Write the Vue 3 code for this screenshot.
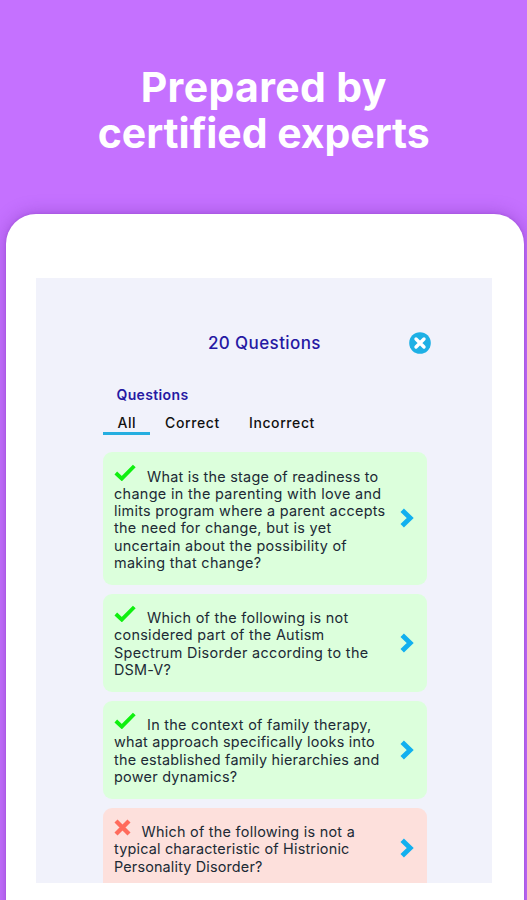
<script setup>
const questions = [
  {
    correct: true,
    lines: [
      ['What is the stage of readiness to', 231.5],
      ['change in the parenting with love and', 267.5],
      ['limits program where a parent accepts', 271.5],
      ['the need for change, but is yet', 217.5],
      ['uncertain about the possibility of', 233],
      ['making that change?', 147.5]
    ]
  },
  {
    correct: true,
    lines: [
      ['Which of the following is not', 201.5],
      ['considered part of the Autism', 210.5],
      ['Spectrum Disorder according to the', 254.5],
      ['DSM-V?', 57]
    ]
  },
  {
    correct: true,
    lines: [
      ['In the context of family therapy,', 224.5],
      ['what approach specifically looks into', 261],
      ['the established family hierarchies and', 265.5],
      ['power dynamics?', 123.5]
    ]
  },
  {
    correct: false,
    lines: [
      ['Which of the following is not a', 213.5],
      ['typical characteristic of Histrionic', 235.5],
      ['Personality Disorder?', 148.5]
    ]
  }
]

// Tracks a line of text out or in so that it sets to the given measure.
const vFit = {
  mounted(el, { value }) {
    el.style.letterSpacing = '0px'
    const width = el.getBoundingClientRect().width
    el.style.letterSpacing = (value - width) / el.textContent.length + 'px'
  }
}
</script>

<template>
  <main class="promo">
    <h1 class="headline">
      <span class="row"><span v-fit="246" class="fit">Prepared by</span></span>
      <span class="row"><span v-fit="332" class="fit">certified experts</span></span>
    </h1>
    <section class="tablet">
      <div class="screen">
        <header class="bar">
          <h2 class="title"><span v-fit="113" class="fit">20 Questions</span></h2>
          <svg class="close" viewBox="0 0 22 22">
            <circle cx="11" cy="11" r="10.8" fill="#1eb0e5" />
            <path d="M7 7l8 8M15 7l-8 8" stroke="#fff" stroke-width="3.4" stroke-linecap="round" />
          </svg>
        </header>
        <h3 class="subtitle"><span v-fit="72" class="fit">Questions</span></h3>
        <nav class="tabs">
          <span class="tab active"><span v-fit="18.5" class="fit">All</span></span>
          <span class="tab"><span v-fit="55" class="fit">Correct</span></span>
          <span class="tab"><span v-fit="66" class="fit">Incorrect</span></span>
        </nav>
        <div class="list">
          <article v-for="(q, i) in questions" :key="i" class="card" :class="{ wrong: !q.correct }">
            <div class="text">
              <div v-for="(line, n) in q.lines" :key="n" class="line">
                <svg v-if="n === 0 && q.correct" class="check" viewBox="0 0 22 17">
                  <path d="M1.8 9l6 5.6L20.3 2" fill="none" stroke="#0ff00f" stroke-width="3.9" />
                </svg>
                <svg v-else-if="n === 0" class="cross" viewBox="0 0 17 17">
                  <path d="M2 2l13 13M15 2L2 15" fill="none" stroke="#ff6b5c" stroke-width="4.3" />
                </svg>
                <span v-fit="line[1]" class="fit">{{ line[0] }}</span>
              </div>
            </div>
            <svg class="chevron" viewBox="0 0 14 20">
              <path d="M2.2 2.2l8 7.8-8 7.8" fill="none" stroke="#12b0ef" stroke-width="4.9" />
            </svg>
          </article>
        </div>
      </div>
    </section>
  </main>
</template>

<style>
body {
  margin: 0;
}
</style>

<style scoped>
.promo {
  box-sizing: border-box;
  height: 900px;
  padding: 65px 3.3px 0 5.7px;
  overflow: hidden;
  background: #c571ff;
  font-family: Inter, "Liberation Sans", sans-serif;
}
.fit {
  display: inline-block;
  white-space: nowrap;
}
.headline {
  display: flex;
  flex-direction: column;
  align-items: center;
  height: 148.5px;
  margin: 0;
  padding-right: 2px;
  color: #fff;
  font-size: 41px;
  font-weight: 650;
  line-height: 45.5px;
}
.row {
  display: block;
}
.tablet {
  box-sizing: border-box;
  height: 760px;
  padding: 64.5px 31.4px 0 30.8px;
  border-radius: 30px;
  background: #fff;
  box-shadow: 0 0 18px rgba(105, 35, 160, 0.4), 0 0 3px rgba(120, 40, 180, 0.3);
}
.screen {
  box-sizing: border-box;
  height: 604.7px;
  padding: 53px 65.5px 0 66.5px;
  overflow: hidden;
  background: #f1f2fb;
}
.bar {
  display: flex;
  align-items: center;
  height: 24px;
}
.title {
  flex: 1;
  margin: 0;
  padding-left: 17px;
  text-align: center;
  color: #2619a3;
  font-size: 17px;
  font-weight: 550;
  line-height: 24px;
}
.close {
  width: 22px;
  height: 22px;
  margin-right: -4px;
}
.subtitle {
  margin: 31px 0 0 13.5px;
  color: #2619a3;
  font-size: 14px;
  font-weight: 600;
  line-height: 18px;
}
.tabs {
  display: flex;
  height: 31px;
}
.tab {
  box-sizing: border-box;
  height: 31px;
  padding: 10px 14.5px 0;
  color: #111;
  font-size: 14px;
  font-weight: 500;
  line-height: 18px;
}
.tab.active {
  border-bottom: 3px solid #25aee0;
}
.list {
  display: flex;
  flex-direction: column;
  gap: 9px;
  padding-top: 17px;
}
.card {
  box-sizing: border-box;
  display: flex;
  align-items: center;
  justify-content: space-between;
  flex-shrink: 0;
  padding: 15.5px 12.5px 13.5px 11px;
  border-radius: 9px;
  background: #dcffdc;
}
.card.wrong {
  padding-bottom: 17px;
  background: #fde0dc;
}
.text {
  color: #202a35;
  font-size: 14.4px;
  line-height: 17.25px;
}
.line {
  display: flex;
  height: 17.25px;
}
.check {
  width: 22px;
  height: 17px;
  margin: -4px 10.5px 0 0.5px;
}
.cross {
  width: 17px;
  height: 17px;
  margin: -4px 10px 0 0.5px;
}
.chevron {
  width: 14px;
  height: 20px;
  margin-top: -2px;
}
</style>
